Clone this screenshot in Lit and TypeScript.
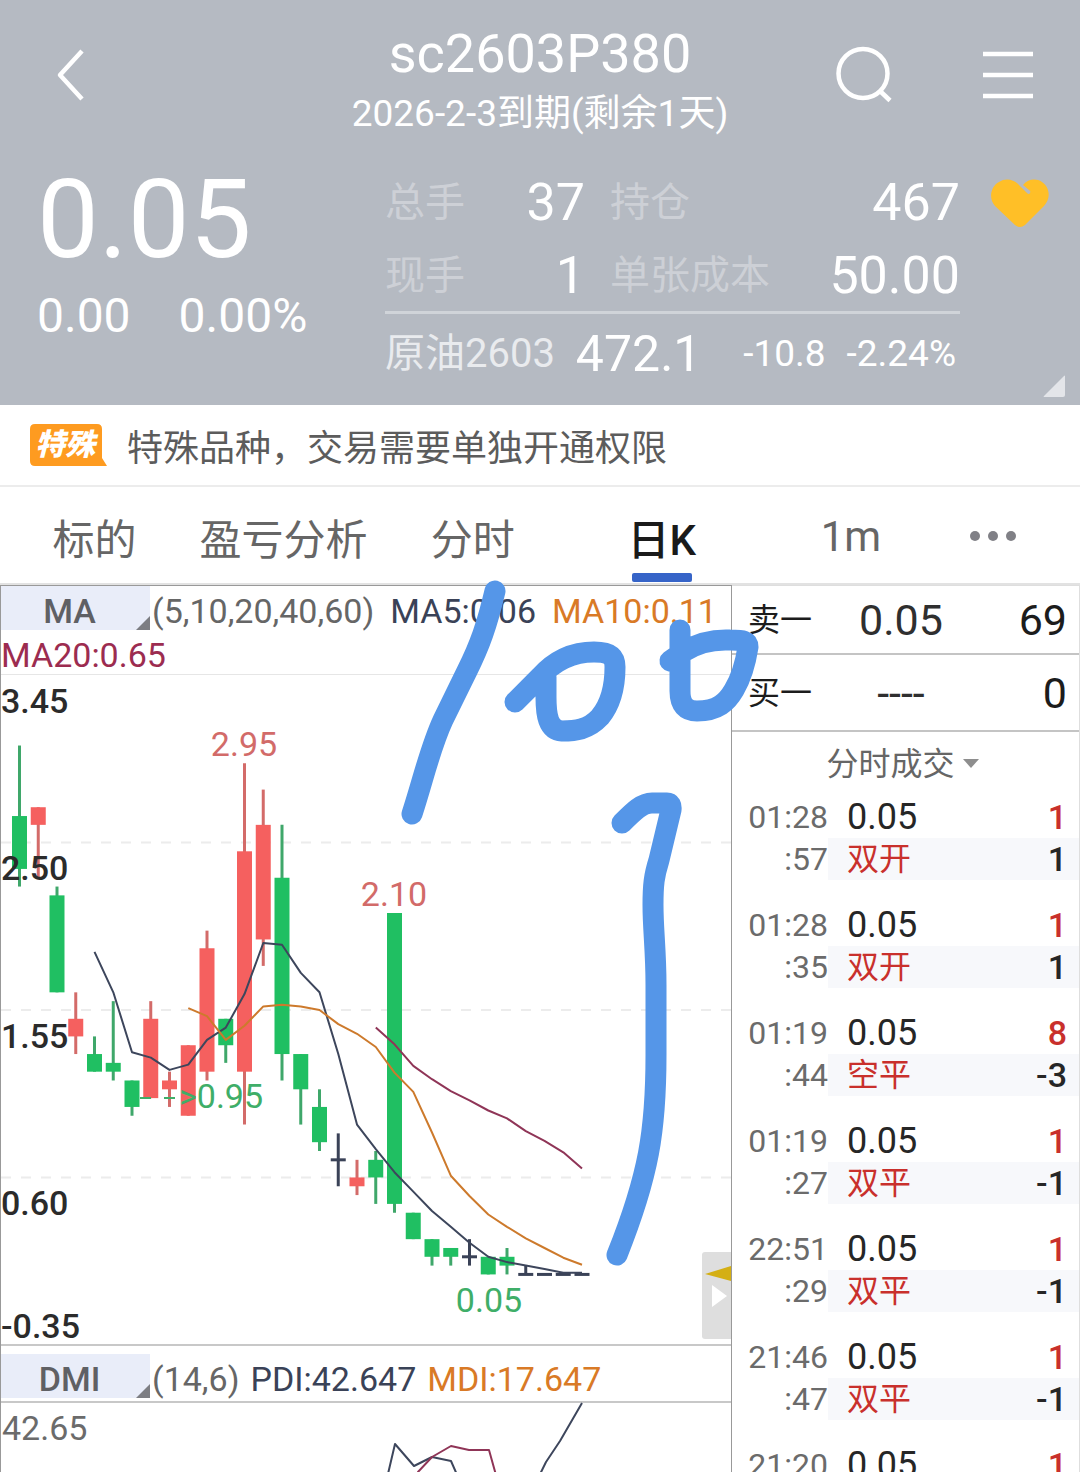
import { LitElement, html, svg, css } from "lit";
import { customElement, state } from "lit/decorators.js";
import { classMap } from "lit/directives/class-map.js";

type Side = "up" | "down" | "flat";
/** Daily record: side, high, body top, body bottom, low */
type Candle = [Side, number, number, number, number];

const CANDLES: Candle[] = [
  ["down", 3.05, 2.65, 2.35, 2.25],
  ["up", 2.7, 2.7, 2.6, 2.3],
  ["down", 2.25, 2.2, 1.65, 1.65],
  ["up", 1.65, 1.5, 1.4, 1.3],
  ["down", 1.4, 1.3, 1.2, 1.2],
  ["down", 1.6, 1.25, 1.2, 1.15],
  ["down", 1.15, 1.15, 1.0, 0.95],
  ["up", 1.6, 1.5, 1.05, 1.05],
  ["up", 1.2, 1.15, 1.1, 1.0],
  ["up", 1.35, 1.35, 0.95, 0.95],
  ["up", 2.0, 1.9, 1.2, 1.15],
  ["down", 1.5, 1.5, 1.35, 1.25],
  ["up", 2.95, 2.45, 1.2, 0.9],
  ["up", 2.8, 2.6, 1.95, 1.8],
  ["down", 2.6, 2.3, 1.3, 1.15],
  ["down", 1.3, 1.3, 1.1, 0.9],
  ["down", 1.1, 1.0, 0.8, 0.75],
  ["flat", 0.85, 0.7, 0.7, 0.55],
  ["up", 0.7, 0.6, 0.55, 0.5],
  ["down", 0.75, 0.7, 0.6, 0.45],
  ["down", 2.1, 2.1, 0.45, 0.4],
  ["down", 0.4, 0.4, 0.25, 0.25],
  ["down", 0.25, 0.25, 0.15, 0.1],
  ["down", 0.2, 0.2, 0.15, 0.1],
  ["flat", 0.25, 0.15, 0.15, 0.1],
  ["down", 0.15, 0.15, 0.05, 0.05],
  ["down", 0.2, 0.15, 0.1, 0.05],
  ["flat", 0.1, 0.05, 0.05, 0.05],
  ["flat", 0.05, 0.05, 0.05, 0.05],
  ["flat", 0.05, 0.05, 0.05, 0.05],
  ["flat", 0.05, 0.05, 0.05, 0.05],
];

const TOP_PRICE = 3.45;
const PX_PER_UNIT = 176.3;
const yOf = (price: number) => (TOP_PRICE - price) * PX_PER_UNIT;
const xOf = (index: number) => 18.5 + index * 18.75;
const closeOf = (c: Candle) => (c[0] === "up" ? c[2] : c[3]);

function movingAverage(period: number): string {
  const points: string[] = [];
  for (let i = period - 1; i < CANDLES.length; i++) {
    const span = CANDLES.slice(i - period + 1, i + 1);
    const mean = span.reduce((sum, c) => sum + closeOf(c), 0) / period;
    points.push(`${xOf(i).toFixed(1)},${yOf(mean).toFixed(1)}`);
  }
  return points.join(" ");
}

const TRADES = [
  { hm: "01:28", s: ":57", price: "0.05", vol: "1", kind: "双开", delta: "1" },
  { hm: "01:28", s: ":35", price: "0.05", vol: "1", kind: "双开", delta: "1" },
  { hm: "01:19", s: ":44", price: "0.05", vol: "8", kind: "空平", delta: "-3" },
  { hm: "01:19", s: ":27", price: "0.05", vol: "1", kind: "双平", delta: "-1" },
  { hm: "22:51", s: ":29", price: "0.05", vol: "1", kind: "双平", delta: "-1" },
  { hm: "21:46", s: ":47", price: "0.05", vol: "1", kind: "双平", delta: "-1" },
  { hm: "21:20", s: "", price: "0.05", vol: "1", kind: "", delta: "" },
];

@customElement("quote-header")
export class QuoteHeader extends LitElement {
  static styles = css`
    :host {
      display: block;
      position: relative;
      flex-shrink: 0;
      background: #b5bac2;
      color: #fff;
    }
    button {
      border: 0;
      padding: 0;
      background: none;
      display: block;
    }
    svg {
      display: block;
    }
    .nav {
      display: grid;
      grid-template-columns: 1fr auto 1fr;
      align-items: start;
      height: 160px;
      padding: 0 40px;
      box-sizing: border-box;
    }
    .title {
      text-align: center;
      padding-top: 21px;
    }
    h1 {
      margin: 0;
      font-size: 54px;
      font-weight: 400;
      line-height: 66px;
    }
    .expiry {
      font-size: 37px;
      line-height: 54px;
    }
    .side {
      padding-top: 42px;
      display: flex;
    }
    .tools {
      justify-content: flex-end;
      gap: 80px;
    }
    .quote {
      display: grid;
      grid-template-columns: 385fr 575fr 120fr;
      align-items: start;
    }
    .last {
      padding-left: 37px;
    }
    .price {
      font-size: 110px;
      line-height: 120px;
    }
    .change {
      display: flex;
      gap: 48px;
      font-size: 48px;
      line-height: 72px;
    }
    .stats {
      padding: 6px 0 11px;
    }
    .pair {
      display: grid;
      grid-template-columns: 200fr 350fr;
      column-gap: 25px;
      height: 74px;
    }
    .ruled {
      border-bottom: 3px solid #d0d4d9;
      height: 71px;
    }
    .cell,
    .under {
      display: flex;
      justify-content: space-between;
      align-items: center;
      line-height: 64px;
    }
    .label {
      font-size: 40px;
      line-height: 58px;
      color: #cdd0d6;
    }
    .value {
      font-size: 52px;
    }
    .under {
      height: 80px;
      padding-right: 4px;
    }
    .under .label {
      color: #e9ebee;
    }
    .under .value {
      font-size: 50px;
    }
    .small {
      font-size: 37px;
    }
    .fav {
      justify-self: center;
      padding-top: 18px;
    }
    .corner {
      position: absolute;
      right: 15px;
      bottom: 8px;
    }
  `;

  render() {
    return html`
      <div class="nav">
        <div class="side">
          <button aria-label="返回">
            <svg width="64" height="64" viewBox="0 0 64 64" fill="none" stroke="#fff" stroke-width="4.5">
              <path d="M42 9 20 33 42 57" stroke-linejoin="round" />
            </svg>
          </button>
        </div>
        <div class="title">
          <h1>sc2603P380</h1>
          <div class="expiry">2026-2-3到期(剩余1天)</div>
        </div>
        <div class="side tools">
          <button aria-label="搜索">
            <svg width="64" height="64" viewBox="0 0 64 64" fill="none" stroke="#fff" stroke-width="4.5">
              <circle cx="31" cy="31.5" r="24.5" />
              <path d="M48 49 58 58.5" />
            </svg>
          </button>
          <button aria-label="菜单">
            <svg width="64" height="64" viewBox="0 0 64 64" fill="none" stroke="#fff" stroke-width="4.5">
              <path d="M7 12H57M7 33H57M7 54H57" />
            </svg>
          </button>
        </div>
      </div>
      <div class="quote">
        <div class="last">
          <div class="price">0.05</div>
          <div class="change"><span>0.00</span><span>0.00%</span></div>
        </div>
        <div class="stats">
          <div class="pair">
            <div class="cell"><span class="label">总手</span><span class="value">37</span></div>
            <div class="cell"><span class="label">持仓</span><span class="value">467</span></div>
          </div>
          <div class="pair ruled">
            <div class="cell"><span class="label">现手</span><span class="value">1</span></div>
            <div class="cell"><span class="label">单张成本</span><span class="value">50.00</span></div>
          </div>
          <div class="under">
            <span class="label">原油2603</span>
            <span class="value">472.1</span>
            <span></span>
            <span class="small">-10.8</span>
            <span class="small">-2.24%</span>
          </div>
        </div>
        <button class="fav" aria-label="自选">
          <svg width="60" height="52" viewBox="0 0 60 52">
            <path
              fill="#ffbf27"
              d="M5 28C-2 20 1 8 9 4 15 0 23 1 28 6L37 15Q39 17 40 15 41 13 39 12L33 7C38 1 46 0 52 4 60 9 61 21 54 28L35 47Q30 51 25 47Z"
            />
          </svg>
        </button>
      </div>
      <svg class="corner" width="22" height="22" viewBox="0 0 22 22">
        <path fill="#e3e5e9" d="M22 1V20Q22 22 20 22H1Q0 22 1 21L21 1Q22 0 22 1Z" />
      </svg>
    `;
  }
}

@customElement("k-chart")
export class KChart extends LitElement {
  static styles = css`
    :host {
      display: flex;
      flex-direction: column;
      box-sizing: border-box;
      border: solid #999;
      border-width: 1px 1px 0;
      min-width: 0;
      overflow: hidden;
      font-size: 34px;
      line-height: 44px;
    }
    :host > * {
      flex-shrink: 0;
    }
    .legend {
      display: flex;
      flex-wrap: wrap;
      align-content: flex-start;
      column-gap: 16px;
      border-bottom: 1px solid #e6e6e6;
      line-height: 50px;
      height: 88px;
    }
    .legend > * {
      height: 44px;
    }
    .sub {
      height: 47px;
      padding-top: 8px;
      column-gap: 11px;
      border-bottom: 2px solid #c8c8c8;
    }
    .head {
      display: flex;
      gap: 2px;
      color: #666;
    }
    .pick {
      position: relative;
      width: 149px;
      height: 44px;
      border: 0;
      padding: 6px 12px 0 0;
      background: #e9edf9;
      color: #5f6064;
      font: inherit;
      font-weight: 500;
      line-height: 38px;
    }
    .pick::after {
      content: "";
      position: absolute;
      right: 0;
      bottom: 0;
      width: 14px;
      height: 14px;
      background: #7d7e83;
      clip-path: polygon(100% 0, 100% 100%, 0 100%);
    }
    .dark {
      color: #3a4257;
    }
    .orange {
      color: #d97a26;
    }
    .crimson {
      color: #9c2c50;
    }
    .plot {
      position: relative;
      border-bottom: 2px solid #c8c8c8;
    }
    .canvas {
      display: block;
      width: 100%;
      overflow: visible;
    }
    .axis {
      fill: #2b2b2b;
      font-weight: 500;
    }
    .tip-up {
      fill: #d26b69;
    }
    .tip-down {
      fill: #3fae68;
    }
    .faint {
      fill: #6b6b6b;
    }
    .grid {
      stroke: #ececec;
      stroke-width: 2;
      stroke-dasharray: 10 10;
    }
    .wick {
      stroke-width: 3;
    }
    .up {
      fill: #f5605f;
      stroke: #d36b69;
    }
    .down {
      fill: #20bf62;
      stroke: #3fa76a;
    }
    .flat {
      fill: #3a4257;
      stroke: #3a4257;
    }
    .body {
      stroke: none;
    }
    .line {
      fill: none;
      stroke-width: 2;
      stroke-linejoin: round;
    }
    .l-dark {
      stroke: #3d465c;
    }
    .l-orange {
      stroke: #cd7a2c;
    }
    .l-crimson {
      stroke: #8f3557;
    }
    .handle {
      position: absolute;
      right: 0;
      bottom: 5px;
      border: 0;
      padding: 0;
      width: 29px;
      height: 87px;
      border-radius: 3px 0 0 3px;
      background: #dedede;
    }
  `;

  private candle(c: Candle, i: number) {
    const [side, high, top, bottom, low] = c;
    const x = xOf(i);
    const flat = side === "flat";
    return svg`
      <g class=${side}>
        <line class="wick" x1=${x} x2=${x} y1=${yOf(high)} y2=${yOf(low)} />
        <rect
          class="body"
          x=${x - 7.5}
          y=${flat ? yOf(top) - 1.5 : yOf(top)}
          width="15"
          height=${flat ? 3 : yOf(bottom) - yOf(top)}
        />
      </g>
    `;
  }

  render() {
    return html`
      <div class="legend">
        <div class="head"><button class="pick">MA</button><span>(5,10,20,40,60)</span></div>
        <span class="dark">MA5:0.06</span>
        <span class="orange">MA10:0.11</span>
        <span class="crimson">MA20:0.65</span>
      </div>
      <div class="plot">
        <svg class="canvas" viewBox="0 0 730 669">
          ${[2.5, 1.55, 0.6].map(
            (p) => svg`<line class="grid" x1="0" x2="730" y1=${yOf(p)} y2=${yOf(p)} />`
          )}
          ${CANDLES.map((c, i) => this.candle(c, i))}
          <polyline class="line l-dark" points=${movingAverage(5)} />
          <polyline class="line l-orange" points=${movingAverage(10)} />
          <polyline class="line l-crimson" points=${movingAverage(20)} />
          <text class="axis" x="0" y="38">3.45</text>
          <text class="axis" x="0" y="205">2.50</text>
          <text class="axis" x="0" y="373">1.55</text>
          <text class="axis" x="0" y="540">0.60</text>
          <text class="axis" x="0" y="663">-0.35</text>
          <text class="tip-up" x="243" y="81" text-anchor="middle">2.95</text>
          <text class="tip-up" x="393" y="231" text-anchor="middle">2.10</text>
          <path d="M139 423H150M163 423H174" stroke="#3fae68" stroke-width="2" />
          <text class="tip-down" x="178" y="433">&gt;0.95</text>
          <text class="tip-down" x="488" y="637" text-anchor="middle">0.05</text>
        </svg>
        <button class="handle" aria-label="展开">
          <svg width="29" height="87" viewBox="0 0 29 87">
            <path fill="#d4af14" d="M3 22 29 14V29Z" />
            <path fill="#fff" d="M10 33 25 44 10 55Z" />
          </svg>
        </button>
      </div>
      <div class="legend sub">
        <div class="head"><button class="pick">DMI</button><span>(14,6)</span></div>
        <span class="dark">PDI:42.647</span>
        <span class="orange">MDI:17.647</span>
      </div>
      <svg class="canvas" viewBox="0 0 730 200">
        <text class="faint" x="1" y="37">42.65</text>
        <polyline
          class="line l-dark"
          points="379,105 394,41 413,63 431,54 450,58 464,90 520,110 545,59 559,38 581,0"
        />
        <polyline class="line l-crimson" points="400,100 417,69 431,54 450,43 468,47 488,47 500,90" />
      </svg>
    `;
  }
}

@customElement("order-book")
export class OrderBook extends LitElement {
  static styles = css`
    :host {
      display: block;
      box-sizing: border-box;
      border: solid #dedede;
      border-width: 1px 1px 0 0;
      min-width: 0;
      overflow: hidden;
      color: #1c1c1c;
    }
    table {
      width: 100%;
      border-collapse: collapse;
      table-layout: fixed;
    }
    th,
    td {
      padding: 0;
      font-weight: 400;
      white-space: nowrap;
      vertical-align: middle;
    }
    .book th,
    .book td {
      height: 67px;
      border-bottom: 2px solid #c4c4c4;
    }
    .book .bid > * {
      height: 75px;
    }
    .book th {
      width: 96px;
      padding-left: 16px;
      box-sizing: border-box;
      text-align: left;
      font-size: 32px;
      line-height: 40px;
    }
    .book td {
      font-size: 43px;
      line-height: 60px;
    }
    .mid {
      text-align: center;
      width: 146px;
      color: #2f2f2f;
    }
    .num {
      text-align: right;
      padding-right: 12px;
    }
    .mode {
      display: flex;
      justify-content: center;
      align-items: center;
      gap: 7px;
      height: 64px;
      padding-right: 6px;
    }
    select {
      appearance: none;
      border: 0;
      padding: 0;
      background: none;
      color: #666;
      font: inherit;
      font-size: 32px;
      line-height: 48px;
    }
    .tape {
      line-height: 42px;
      font-size: 36px;
      color: #262626;
    }
    .time {
      width: 96px;
      text-align: right;
      color: #6b6b6b;
      font-size: 32px;
    }
    .tape tr {
      height: 42px;
    }
    .second td {
      padding-bottom: 24px;
    }
    .band {
      height: 42px;
      background: #f7f8fb;
    }
    .lead {
      padding-left: 19px;
    }
    .kind {
      font-size: 32px;
      color: #c9302c;
    }
    .tape .num {
      font-size: 34px;
      font-weight: 500;
    }
    .red {
      color: #c9302c;
    }
  `;

  render() {
    return html`
      <table class="book">
        <tr>
          <th scope="row">卖一</th>
          <td class="mid">0.05</td>
          <td class="num">69</td>
        </tr>
        <tr class="bid">
          <th scope="row">买一</th>
          <td class="mid">----</td>
          <td class="num">0</td>
        </tr>
      </table>
      <label class="mode">
        <select aria-label="明细类型">
          <option>分时成交</option>
        </select>
        <svg width="16" height="10" viewBox="0 0 16 10"><path fill="#8e8e8e" d="M0 0H16L8 9Z" /></svg>
      </label>
      <table class="tape">
        ${TRADES.map(
          (t) => html`
            <tbody>
              <tr>
                <td class="time">${t.hm}</td>
                <td><div class="lead">${t.price}</div></td>
                <td><div class="num red">${t.vol}</div></td>
              </tr>
              <tr class="second">
                <td class="time">${t.s}</td>
                <td><div class="band lead kind">${t.kind}</div></td>
                <td><div class="band num">${t.delta}</div></td>
              </tr>
            </tbody>
          `
        )}
      </table>
    `;
  }
}

@customElement("app-root")
export class AppRoot extends LitElement {
  static styles = css`
    :host {
      display: flex;
      flex-direction: column;
      height: 100vh;
      overflow: hidden;
      background: #fff;
      font-family: Roboto, "Noto Sans CJK SC", sans-serif;
    }
    .notice {
      display: flex;
      flex-shrink: 0;
      align-items: center;
      gap: 20px;
      height: 80px;
      padding-left: 30px;
      border-bottom: 2px solid #ececec;
      font-size: 36px;
      color: #5c5c5c;
    }
    .badge {
      position: relative;
      display: flex;
      align-items: center;
      width: 77px;
      height: 42px;
      color: #fff;
      font-size: 30px;
      line-height: 38px;
      font-weight: 900;
      font-style: italic;
    }
    .badge svg {
      position: absolute;
      inset: 0;
    }
    .badge span {
      position: relative;
      padding-left: 5px;
    }
    .tabs {
      display: grid;
      flex-shrink: 0;
      grid-template-columns: repeat(5, 2fr) 1fr;
      padding-right: 40px;
      height: 96px;
      border-bottom: 2px solid #e2e2e2;
    }
    .tab {
      position: relative;
      border: 0;
      padding: 2px 0 0;
      background: none;
      color: #666;
      font: inherit;
      font-size: 42px;
      white-space: nowrap;
    }
    .tab svg {
      display: block;
      margin: 0 auto;
    }
    .active {
      color: #1a1a1a;
      font-weight: 500;
    }
    .active::after {
      content: "";
      position: absolute;
      left: calc(50% - 30px);
      bottom: 1px;
      width: 60px;
      height: 9px;
      border-radius: 2px;
      background: #3664c8;
    }
    .market {
      position: relative;
      flex: 1;
      min-height: 0;
      display: grid;
      grid-template-columns: 732fr 348fr;
    }
    .ink {
      position: absolute;
      top: 0;
      left: 0;
      width: 100%;
      overflow: visible;
      pointer-events: none;
      fill: none;
      stroke: #5596e8;
      stroke-width: 21;
      stroke-linecap: round;
      stroke-linejoin: round;
    }
  `;

  @state() private active = "日K";

  render() {
    const tabs = ["标的", "盈亏分析", "分时", "日K", "1m"];
    return html`
      <quote-header></quote-header>
      <div class="notice">
        <div class="badge">
          <svg width="77" height="42" viewBox="0 0 77 42">
            <path fill="#fe9b20" d="M5 0H67Q72 0 72 5V34L77 42H5Q0 42 0 37V5Q0 0 5 0Z" />
          </svg>
          <span>特殊</span>
        </div>
        <span>特殊品种，交易需要单独开通权限</span>
      </div>
      <nav class="tabs">
        ${tabs.map(
          (t) => html`<button
            class=${classMap({ tab: true, active: t === this.active })}
            @click=${() => (this.active = t)}
          >
            ${t}
          </button>`
        )}
        <button class="tab" aria-label="更多">
          <svg width="48" height="10" viewBox="0 0 48 10" fill="#808086">
            <circle cx="6" cy="5" r="5" />
            <circle cx="24" cy="5" r="5" />
            <circle cx="42" cy="5" r="5" />
          </svg>
        </button>
      </nav>
      <main class="market">
        <k-chart></k-chart>
        <order-book></order-book>
        <svg class="ink" viewBox="0 0 1080 887">
          <path d="M495 6C487 40 480 60 467 86L443 135C430 163 424 192 412 229" />
          <path
            d="M515 117L540 92C556 74 575 67 594 67C608 67 615 70 615 82C615 105 610 120 600 132C588 145 575 146 562 146C548 145 546 130 546 112V92"
          />
          <path
            d="M680 45V106C680 120 686 126 697 126C718 126 727 117 734 105C743 90 746 75 748 62C748 56 744 55 730 55C708 54 695 60 685 66C678 70 674 73 670 76"
          />
          <path
            d="M622 238C634 226 642 218 652 218H667Q672 218 671 225L659 275C654 291 653 300 653 320C653 345 656 365 656 400V470C656 545 649 590 617 670"
          />
        </svg>
      </main>
    `;
  }
}
